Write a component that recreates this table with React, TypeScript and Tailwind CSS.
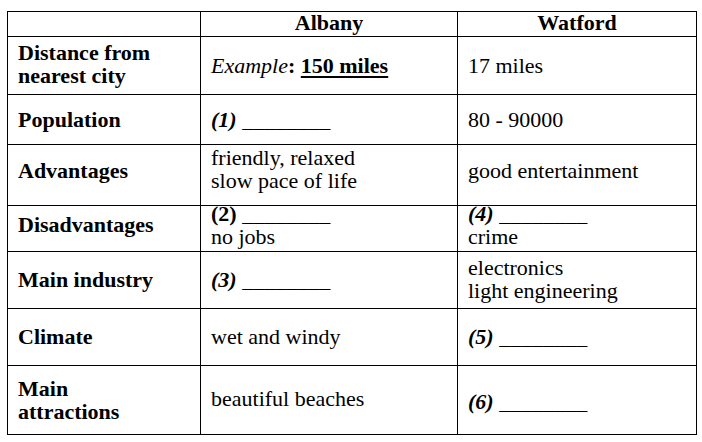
function Blank({ n, italic = true }: { n: number; italic?: boolean }) {
  return (
    <span>
      <span className={italic ? "font-bold italic" : "font-bold"}>({n})</span> ________
    </span>
  );
}

function Cell({ children, center = false, bold = false, className = "" }: { children?: React.ReactNode; center?: boolean; bold?: boolean; className?: string }) {
  return (
    <div className={"bg-white flex flex-col justify-center px-[10px] " + (center ? "items-center " : "") + (bold ? "font-bold " : "") + className}>
      {children}
    </div>
  );
}

export default function App() {
  return (
    <div className="w-[702px] h-[442px] bg-white pt-[11px] pl-[7px] text-black text-[22px] leading-[23px] font-['Liberation_Serif','Times_New_Roman',serif]">
      <div className="grid grid-cols-[192px_256px_238px] grid-rows-[24px_57px_49px_60px_45px_56px_56px_68px] gap-px bg-black p-px w-[690px]">
        <Cell />
        <Cell center bold className="pb-[3px]">Albany</Cell>
        <Cell center bold className="pb-[3px]">Watford</Cell>

        <Cell bold className="pb-[3px]"><span>Distance from</span><span>nearest city</span></Cell>
        <Cell className="pb-[1px]">
          <span>
            <span className="italic">Example</span><span className="font-bold">:</span>{" "}
            <span className="font-bold underline decoration-2 underline-offset-[3px]">150 miles</span>
          </span>
        </Cell>
        <Cell className="pb-[1px]">17 miles</Cell>

        <Cell bold>Population</Cell>
        <Cell><Blank n={1} /></Cell>
        <Cell>80 - 90000</Cell>

        <Cell bold className="pb-[10px]">Advantages</Cell>
        <Cell className="pb-[13px]"><span>friendly, relaxed</span><span>slow pace of life</span></Cell>
        <Cell className="pb-[10px]">good entertainment</Cell>

        <Cell bold className="pb-[9px]">Disadvantages</Cell>
        <Cell className="pb-[8px]"><Blank n={2} italic={false} /><span>no jobs</span></Cell>
        <Cell className="pb-[8px]"><Blank n={4} /><span>crime</span></Cell>

        <Cell bold className="pb-[2px]">Main industry</Cell>
        <Cell className="pb-[2px]"><Blank n={3} /></Cell>
        <Cell className="pb-[3px]"><span>electronics</span><span>light engineering</span></Cell>

        <Cell bold className="pb-[1px]">Climate</Cell>
        <Cell className="pb-[1px]">wet and windy</Cell>
        <Cell className="pb-[1px]"><Blank n={5} /></Cell>

        <Cell bold><span>Main</span><span>attractions</span></Cell>
        <Cell className="pb-[3px]">beautiful beaches</Cell>
        <Cell className="pt-[2px]"><Blank n={6} /></Cell>
      </div>
    </div>
  );
}
